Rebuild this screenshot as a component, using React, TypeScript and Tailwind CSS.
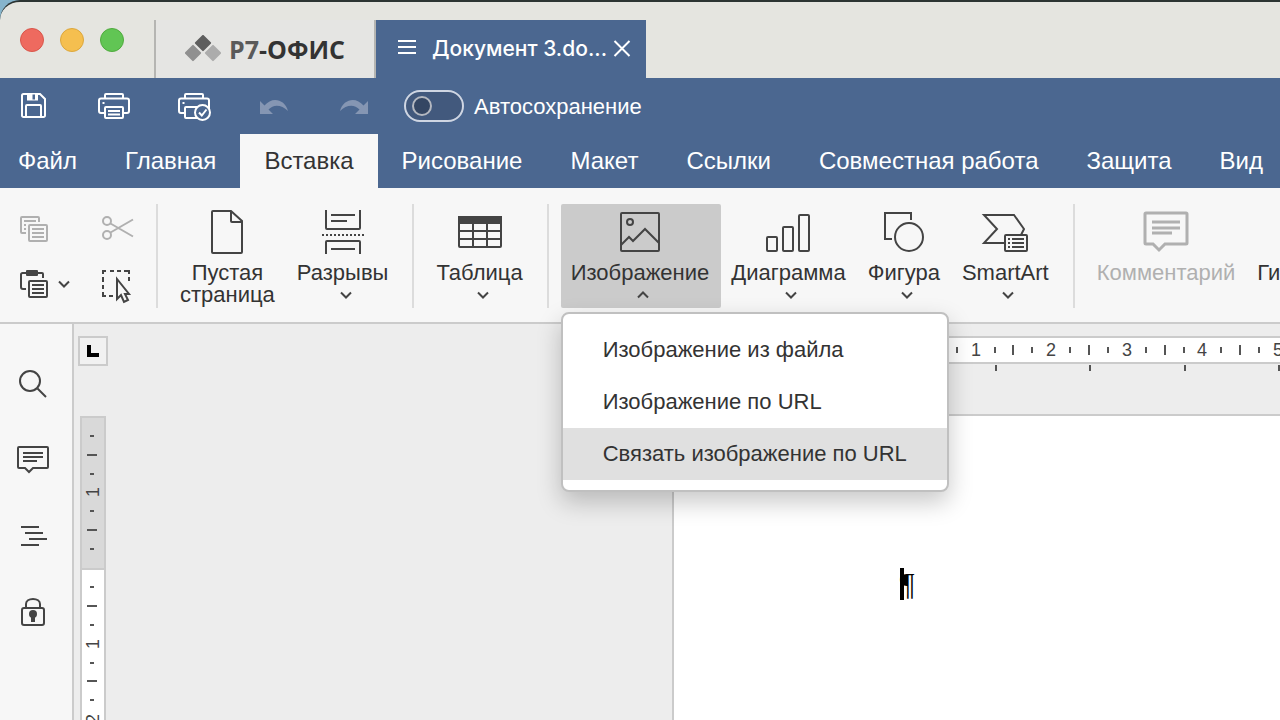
import React from 'react';
import type { ReactNode } from 'react';

const MENU_TABS = [
  'Файл',
  'Главная',
  'Вставка',
  'Рисование',
  'Макет',
  'Ссылки',
  'Совместная работа',
  'Защита',
  'Вид',
];

const IMAGE_MENU = ['Изображение из файла', 'Изображение по URL', 'Связать изображение по URL'];

// one centimetre on the rulers, in pixels
const CM = 75.6;

/* ---------- icons ---------- */

function SaveIcon() {
  return (
    <svg width="40" height="40" viewBox="0 0 40 40" fill="none" stroke="currentColor" strokeWidth="2">
      <path d="M9.5 8H26l5 5v16.5a1.5 1.5 0 0 1-1.5 1.5h-20A1.5 1.5 0 0 1 8 29.500V9.500A1.5 1.5 0 0 1 9.500 8z" />
      <path d="M12 31V20a1 1 0 0 1 1-1h13a1 1 0 0 1 1 1v11" />
      <path d="M13 8h11v6.500H13z" fill="currentColor" stroke="none" />
      <path d="M18.500 8.500h2.500v5h-2.500z" fill="#4b6790" stroke="none" />
    </svg>
  );
}

function PrinterBase() {
  return (
    <>
      <path d="M11 12V9a1 1 0 0 1 1-1h16a1 1 0 0 1 1 1v3" />
      <path d="M10 27H7a2 2 0 0 1-2-2V14.500A2 2 0 0 1 7 12.500h26a2 2 0 0 1 2 2V25a2 2 0 0 1-2 2h-3" />
      <path d="M8.500 17h2" />
    </>
  );
}

function PrintIcon() {
  return (
    <svg width="40" height="40" viewBox="0 0 40 40" fill="none" stroke="currentColor" strokeWidth="2">
      <PrinterBase />
      <rect x="11" y="21" width="18" height="11" rx="1" />
      <path d="M14 25h12M14 28.500h12" />
    </svg>
  );
}

function QuickPrintIcon() {
  return (
    <svg width="40" height="40" viewBox="0 0 40 40" fill="none" stroke="currentColor" strokeWidth="2">
      <PrinterBase />
      <path d="M24 32H12a1 1 0 0 1-1-1V22a1 1 0 0 1 1-1h15" />
      <circle cx="28.500" cy="26.500" r="7.500" fill="#4b6790" />
      <path d="M25 26.500l2.800 3 4.700-6" />
    </svg>
  );
}

function UndoIcon({ flip = false }: { flip?: boolean }) {
  return (
    <svg width="40" height="40" viewBox="0 0 40 40" fill="#8596b3" className={flip ? '-scale-x-100' : ''}>
      <path d="M6 15v13h13l-4.500-4.500c5-5.500 13-5 19.500 1.500C31 13 18 10 10.500 19.500z" />
    </svg>
  );
}

function CopyIcon() {
  return (
    <svg width="28" height="26" viewBox="0 0 28 26" fill="none" stroke="currentColor" strokeWidth="2">
      <path d="M6 17H2a1 1 0 0 1-1-1V2a1 1 0 0 1 1-1h16a1 1 0 0 1 1 1v4" />
      <path d="M4 5h12M4 9h2M4 13h2" />
      <rect x="9" y="9" width="18" height="16" rx="1" fill="#f7f7f7" />
      <path d="M12 13h12M12 17h12M12 21h12" />
    </svg>
  );
}

function CutIcon() {
  return (
    <svg width="32" height="26" viewBox="0 0 32 26" fill="none" stroke="currentColor" strokeWidth="2">
      <circle cx="5" cy="5" r="4" />
      <circle cx="5" cy="19" r="4" />
      <path d="M8.500 7.500L31 20.500M8.500 16.500L31 3.500" />
    </svg>
  );
}

function PasteIcon() {
  return (
    <svg width="28" height="28" viewBox="0 0 28 28" fill="none" stroke="currentColor" strokeWidth="2">
      <path d="M6 19H3a2 2 0 0 1-2-2V4.500A1.500 1.500 0 0 1 2.500 3H22a1 1 0 0 1 1 1v4" />
      <rect x="6" y="0" width="12" height="6" rx="1" fill="currentColor" stroke="none" />
      <rect x="9" y="11" width="18" height="16" rx="1" fill="#f7f7f7" />
      <path d="M12 15h12M12 19h12M12 23h12" />
    </svg>
  );
}

function SelectIcon() {
  return (
    <svg width="30" height="34" viewBox="0 0 30 34" fill="none" stroke="currentColor" strokeWidth="2">
      <path d="M1 4V1h3M8 1h4M15 1h4M22 1h5v3M1 7v5M1 15v4M1 22v4h3M7 26h4M27 7v4" />
      <path d="M15 9v20l4-4 3 7 4-2-3-6h4z" fill="#f7f7f7" />
    </svg>
  );
}

function Chevron({ up = false }: { up?: boolean }) {
  return (
    <svg
      width="12"
      height="8"
      viewBox="0 0 12 8"
      fill="none"
      stroke="currentColor"
      strokeWidth="2"
      className={up ? 'rotate-180' : ''}
    >
      <path d="M1 1.500l5 5 5-5" />
    </svg>
  );
}

function RibbonIcon({ children }: { children: ReactNode }) {
  return (
    <svg width="48" height="48" viewBox="0 0 48 48" fill="none" stroke="currentColor" strokeWidth="2">
      {children}
    </svg>
  );
}

const PageIcon = (
  <RibbonIcon>
    <path d="M10 3h18l11 10v31a1 1 0 0 1-1 1H10a1 1 0 0 1-1-1V4a1 1 0 0 1 1-1z" />
    <path d="M28 3v10a1 1 0 0 0 1 1h10" />
  </RibbonIcon>
);

const BreaksIcon = (
  <RibbonIcon>
    <path d="M7 2v18a1 1 0 0 0 1 1h32a1 1 0 0 0 1-1V2M12 7h24M12 13h16" />
    <path d="M3 27h42" strokeDasharray="2 2" />
    <path d="M7 46V34a1 1 0 0 1 1-1h32a1 1 0 0 1 1 1v12M12 41h24" />
  </RibbonIcon>
);

const TableIcon = (
  <RibbonIcon>
    <rect x="3" y="9" width="42" height="30" rx="1" />
    <path d="M3 9h42v6H3z" fill="currentColor" />
    <path d="M3 23h42M3 31h42M17 16v23M31 16v23" />
  </RibbonIcon>
);

const ImageIcon = (
  <RibbonIcon>
    <rect x="5" y="5" width="38" height="38" rx="1" />
    <circle cx="14" cy="14" r="3" />
    <path d="M5 37l8-8 4 4 12-12 14 14" />
  </RibbonIcon>
);

const ChartIcon = (
  <RibbonIcon>
    <rect x="3" y="29" width="10" height="14" rx="1" />
    <rect x="19" y="19" width="10" height="24" rx="1" />
    <rect x="35" y="7" width="10" height="36" rx="1" />
  </RibbonIcon>
);

const ShapeIcon = (
  <RibbonIcon>
    <path d="M12 31H5V5h26v7" />
    <circle cx="29" cy="29" r="14" />
  </RibbonIcon>
);

const SmartArtIcon = (
  <RibbonIcon>
    <path d="M24 35H3l13-14L3 7h30l10 14-3 6" />
    <rect x="24" y="27" width="22" height="16" rx="1" />
    <path d="M27 31h2M31 31h12M27 35h2M31 35h12M27 39h2M31 39h12" />
  </RibbonIcon>
);

const CommentIcon = (
  <RibbonIcon>
    <path
      d="M4 5h40a1 1 0 0 1 1 1v29a1 1 0 0 1-1 1H23l-6 6-6-6H4a1 1 0 0 1-1-1V6a1 1 0 0 1 1-1z"
      strokeWidth="3"
    />
    <path d="M10 14h28M10 20h28M10 25h20" strokeWidth="3" />
  </RibbonIcon>
);

function SideIcon({ children }: { children: ReactNode }) {
  return (
    <svg width="36" height="36" viewBox="0 0 36 36" fill="none" stroke="currentColor" strokeWidth="2">
      {children}
    </svg>
  );
}

/* ---------- title bar ---------- */

function TitleBar() {
  return (
    <div className="shrink-0 bg-[#86b4cc]">
      <header className="flex h-[78px] items-end rounded-tl-[20px] border-t-2 border-[#2c3433] bg-[#e5e5e0]">
        <div className="flex h-[76px] w-[154px] shrink-0 items-center gap-4 pl-5">
          <button aria-label="Закрыть окно" className="size-6 rounded-full border border-[#d9564b] bg-[#ee6a5f]" />
          <button aria-label="Свернуть" className="size-6 rounded-full border border-[#dca73c] bg-[#f5bf4f]" />
          <button aria-label="Развернуть" className="size-6 rounded-full border border-[#50ab3e] bg-[#61c554]" />
        </div>
        <a
          href="#home"
          className="flex h-[58px] w-[222px] shrink-0 items-center justify-center gap-2 border-x-2 border-[#b5b5b2] bg-[#e5e5e3]"
        >
          <svg width="36" height="28" viewBox="0 0 36 28">
            <rect x="12" y="2" width="12" height="12" rx="1" fill="#5e5e5e" transform="rotate(45 18 8)" />
            <rect x="2" y="12" width="12" height="12" rx="1" fill="#909090" transform="rotate(45 8 18)" />
            <rect x="22" y="12" width="12" height="12" rx="1" fill="#acacac" transform="rotate(45 28 18)" />
          </svg>
          <span className="font-['Open_Sans',sans-serif] text-[25px] leading-8 font-bold text-[#333]">
            <span className="text-[#5a5a5a]">Р7</span>-ОФИС
          </span>
        </a>
        <div className="flex h-[58px] w-[270px] shrink-0 items-center bg-[#4b6790] pl-[22px] text-white">
          <svg width="18" height="18" viewBox="0 0 18 18" stroke="currentColor" strokeWidth="2">
            <path d="M0 1h18M0 7h18M0 13h18" />
          </svg>
          <span className="ml-4 font-['Inter',sans-serif] text-[21px] font-medium whitespace-nowrap">
            Документ 3.do...
          </span>
          <button aria-label="Закрыть вкладку" className="ml-[6px]">
            <svg width="18" height="18" viewBox="0 0 18 18" stroke="currentColor" strokeWidth="2">
              <path d="M1.500 1l15 15M16.500 1l-15 15" />
            </svg>
          </button>
        </div>
      </header>
    </div>
  );
}

/* ---------- blue bars ---------- */

function QuickBar() {
  return (
    <div className="flex h-14 shrink-0 items-center bg-[#4b6790] pl-[14px] text-white">
      <div className="flex gap-10">
        <button aria-label="Сохранить"><SaveIcon /></button>
        <button aria-label="Печать"><PrintIcon /></button>
        <button aria-label="Быстрая печать"><QuickPrintIcon /></button>
        <button aria-label="Отменить" disabled><UndoIcon /></button>
        <button aria-label="Повторить" disabled><UndoIcon flip /></button>
      </div>
      <label className="ml-[30px] flex items-center gap-[10px] text-[22px]">
        <input
          type="checkbox"
          className="h-8 w-[60px] appearance-none rounded-full border-2 border-[#cfd6e3] bg-[#42597d] before:mt-1 before:ml-[6px] before:block before:size-5 before:rounded-full before:border-2 before:border-[#b4b8c0] before:bg-[#344663]"
        />
        Автосохранение
      </label>
    </div>
  );
}

function MenuTabs() {
  return (
    <nav className="flex h-[54px] shrink-0 overflow-hidden bg-[#4b6790] text-2xl">
      {MENU_TABS.map((tab) => (
        <button
          key={tab}
          className={
            tab === 'Вставка'
              ? 'shrink-0 bg-[#f7f7f7] px-6 text-[#333]'
              : 'shrink-0 px-6 text-white first:pl-[18px]'
          }
        >
          {tab}
        </button>
      ))}
    </nav>
  );
}

/* ---------- ribbon ---------- */

type RibbonButtonProps = {
  icon?: ReactNode;
  label: ReactNode;
  arrow?: 'down' | 'up';
  active?: boolean;
  disabled?: boolean;
};

function RibbonButton({ icon, label, arrow, active, disabled }: RibbonButtonProps) {
  return (
    <button
      disabled={disabled}
      className={`flex h-[104px] shrink-0 flex-col items-center rounded-xs pt-1 pr-3 pl-[10px] text-[22px] leading-[22px] ${
        active ? 'bg-[#cbcbcb]' : ''
      } ${disabled ? 'text-[#b0b0b0]' : 'text-[#444]'}`}
    >
      <span className="h-[54px]">{icon}</span>
      <span className={disabled ? 'whitespace-nowrap' : 'whitespace-nowrap text-[#333]'}>{label}</span>
      {arrow && (
        <span className="mt-[7px] ml-[6px] leading-none">
          <Chevron up={arrow === 'up'} />
        </span>
      )}
    </button>
  );
}

function Divider() {
  return <div className="h-[104px] w-[2px] shrink-0 bg-[#dcdcdc]" />;
}

function ImageMenu() {
  return (
    <ul className="absolute top-[108px] left-0 z-10 rounded-lg border-2 border-[#c0c0c0] bg-white py-[10px] shadow-[0_10px_24px_rgba(0,0,0,0.22)]">
      {IMAGE_MENU.map((item) => (
        <li key={item}>
          <button
            className={`h-[52px] w-full px-10 pb-[2px] text-left text-[22px] whitespace-nowrap text-[#333] ${
              item.startsWith('Связать') ? 'bg-[#e0e0e0]' : ''
            }`}
          >
            {item}
          </button>
        </li>
      ))}
    </ul>
  );
}

function Ribbon() {
  return (
    <div className="shrink-0 border-b-2 border-[#cbcbcb] bg-[#f7f7f7] pt-4 pb-[14px]">
      <div className="flex text-[#444]">
        <div className="grid w-[156px] shrink-0 grid-cols-[82px_1fr] grid-rows-[54px_38px] pt-3 pl-5">
          <button aria-label="Копировать" disabled className="self-start justify-self-start text-[#b0b0b0]">
            <CopyIcon />
          </button>
          <button aria-label="Вырезать" disabled className="self-start justify-self-start text-[#b0b0b0]">
            <CutIcon />
          </button>
          <button aria-label="Вставить" className="flex items-center gap-[10px] self-start">
            <PasteIcon />
            <Chevron />
          </button>
          <button aria-label="Выделить" className="self-start justify-self-start">
            <SelectIcon />
          </button>
        </div>
        <Divider />
        <div className="flex px-3">
          <RibbonButton icon={PageIcon} label={<>Пустая<br />страница</>} />
          <RibbonButton icon={BreaksIcon} label="Разрывы" arrow="down" />
        </div>
        <Divider />
        <div className="flex px-3">
          <RibbonButton icon={TableIcon} label="Таблица" arrow="down" />
        </div>
        <Divider />
        <div className="flex px-3">
          <div className="relative">
            <RibbonButton icon={ImageIcon} label="Изображение" arrow="up" active />
            <ImageMenu />
          </div>
          <RibbonButton icon={ChartIcon} label="Диаграмма" arrow="down" />
          <RibbonButton icon={ShapeIcon} label="Фигура" arrow="down" />
          <RibbonButton icon={SmartArtIcon} label="SmartArt" arrow="down" />
        </div>
        <Divider />
        <div className="flex w-0 grow overflow-hidden pl-3">
          <RibbonButton icon={CommentIcon} label="Комментарий" disabled />
          <RibbonButton label="Гиперссылка" />
        </div>
      </div>
    </div>
  );
}

/* ---------- workspace ---------- */

function Sidebar() {
  return (
    <aside className="flex w-[74px] shrink-0 flex-col items-center gap-10 border-r-2 border-[#cbcbcb] bg-[#f7f7f7] pt-[42px] pr-[6px] text-[#444]">
      <button aria-label="Поиск">
        <SideIcon>
          <circle cx="15" cy="15" r="10" />
          <path d="M22.500 22.500l8.500 8.500" />
        </SideIcon>
      </button>
      <button aria-label="Комментарии">
        <SideIcon>
          <path d="M4 5h28a1 1 0 0 1 1 1v19a1 1 0 0 1-1 1H18l-4 4-4-4H4a1 1 0 0 1-1-1V6a1 1 0 0 1 1-1z" />
          <path d="M8 11h20M8 15h20M8 19h14" />
        </SideIcon>
      </button>
      <button aria-label="Заголовки">
        <SideIcon>
          <path d="M6 9h18M10 15h18M14 21h18M6 27h18" />
        </SideIcon>
      </button>
      <button aria-label="Защита документа">
        <SideIcon>
          <path d="M11 14v-4c0-3 3-5 7-5s7 2 7 5v4" />
          <rect x="7" y="14" width="22" height="17" rx="2" />
          <circle cx="18" cy="20" r="4" fill="currentColor" stroke="none" />
          <path d="M18 21v7" strokeWidth="4" />
        </SideIcon>
      </button>
    </aside>
  );
}

// quarter-centimetre marks; every fourth one is a number instead of a tick
const quarters = (cm: number) => Array.from({ length: cm * 4 }, (_, i) => i + 1);

function HorizontalRuler() {
  const zero = 228;
  return (
    <svg width="100%" height="36" className="block">
      <rect width="100%" height="28" fill="#cbcbcb" />
      <rect y="2" width="100%" height="24" fill="#fff" />
      <rect y="2" width={zero} height="24" fill="#d9d9d9" />
      {quarters(17).map((q) => {
        const x = Math.round(zero + (q * CM) / 4);
        if (q % 4 === 0) {
          return (
            <text key={q} x={x} y="20" fontSize="18" textAnchor="middle" fill="#444">
              {q / 4}
            </text>
          );
        }
        const long = q % 2 === 0;
        return <rect key={q} x={x - 1} y={long ? 9 : 11} width="2" height={long ? 10 : 6} fill="#555" />;
      })}
      {/* default tab stops, every 1.25 cm */}
      {quarters(3).map((n) => (
        <rect key={n} x={Math.round(zero + n * CM * 1.25)} y="29" width="2" height="6" fill="#555" />
      ))}
    </svg>
  );
}

function VerticalRuler() {
  const zero = 152;
  return (
    <svg width="26" height="2000" className="block">
      <rect width="26" height="2000" fill="#cbcbcb" />
      <rect x="2" y="2" width="22" height="150" fill="#d9d9d9" />
      <rect x="2" y="154" width="22" height="1846" fill="#fff" />
      {[-7, -6, -5, -4, -3, -2, -1, ...quarters(10)].map((q) => {
        const y = Math.round(zero + (q * CM) / 4);
        if (q % 4 === 0) {
          return (
            <text
              key={q}
              transform={`translate(19 ${y}) rotate(-90)`}
              fontSize="18"
              textAnchor="middle"
              fill="#444"
            >
              {Math.abs(q / 4)}
            </text>
          );
        }
        const long = q % 2 === 0;
        return <rect key={q} x={long ? 7 : 10} y={y - 1} width={long ? 10 : 4} height="2" fill="#555" />;
      })}
    </svg>
  );
}

function Workspace() {
  return (
    <main className="flex min-h-0 grow basis-0 overflow-hidden bg-[#ededed]">
      <Sidebar />
      <div className="flex w-[598px] shrink-0 flex-col overflow-hidden pt-3 pl-1">
        <button
          aria-label="Табуляция"
          className="flex size-[30px] shrink-0 items-center justify-center border-2 border-[#cbcbcb] bg-[#f1f1f1]"
        >
          <span className="size-3 border-b-4 border-l-4 border-black" />
        </button>
        <div className="mt-[50px] ml-[2px]">
          <VerticalRuler />
        </div>
      </div>
      <div className="flex min-w-0 grow flex-col pt-3">
        <HorizontalRuler />
        <div className="mt-[42px] grow border-t-2 border-l-2 border-[#cbcbcb] bg-white pt-[152px] pl-[226px]">
          <p className="flex h-8 font-['Liberation_Serif',serif] text-[32px] leading-8 text-black">
            <span className="h-8 w-1 bg-black" />
            <span className="-ml-1">¶</span>
          </p>
        </div>
      </div>
    </main>
  );
}

export default function App() {
  return (
    <div className="flex h-screen flex-col overflow-hidden font-['Liberation_Sans',Arial,sans-serif]">
      <TitleBar />
      <QuickBar />
      <MenuTabs />
      <Ribbon />
      <Workspace />
    </div>
  );
}
